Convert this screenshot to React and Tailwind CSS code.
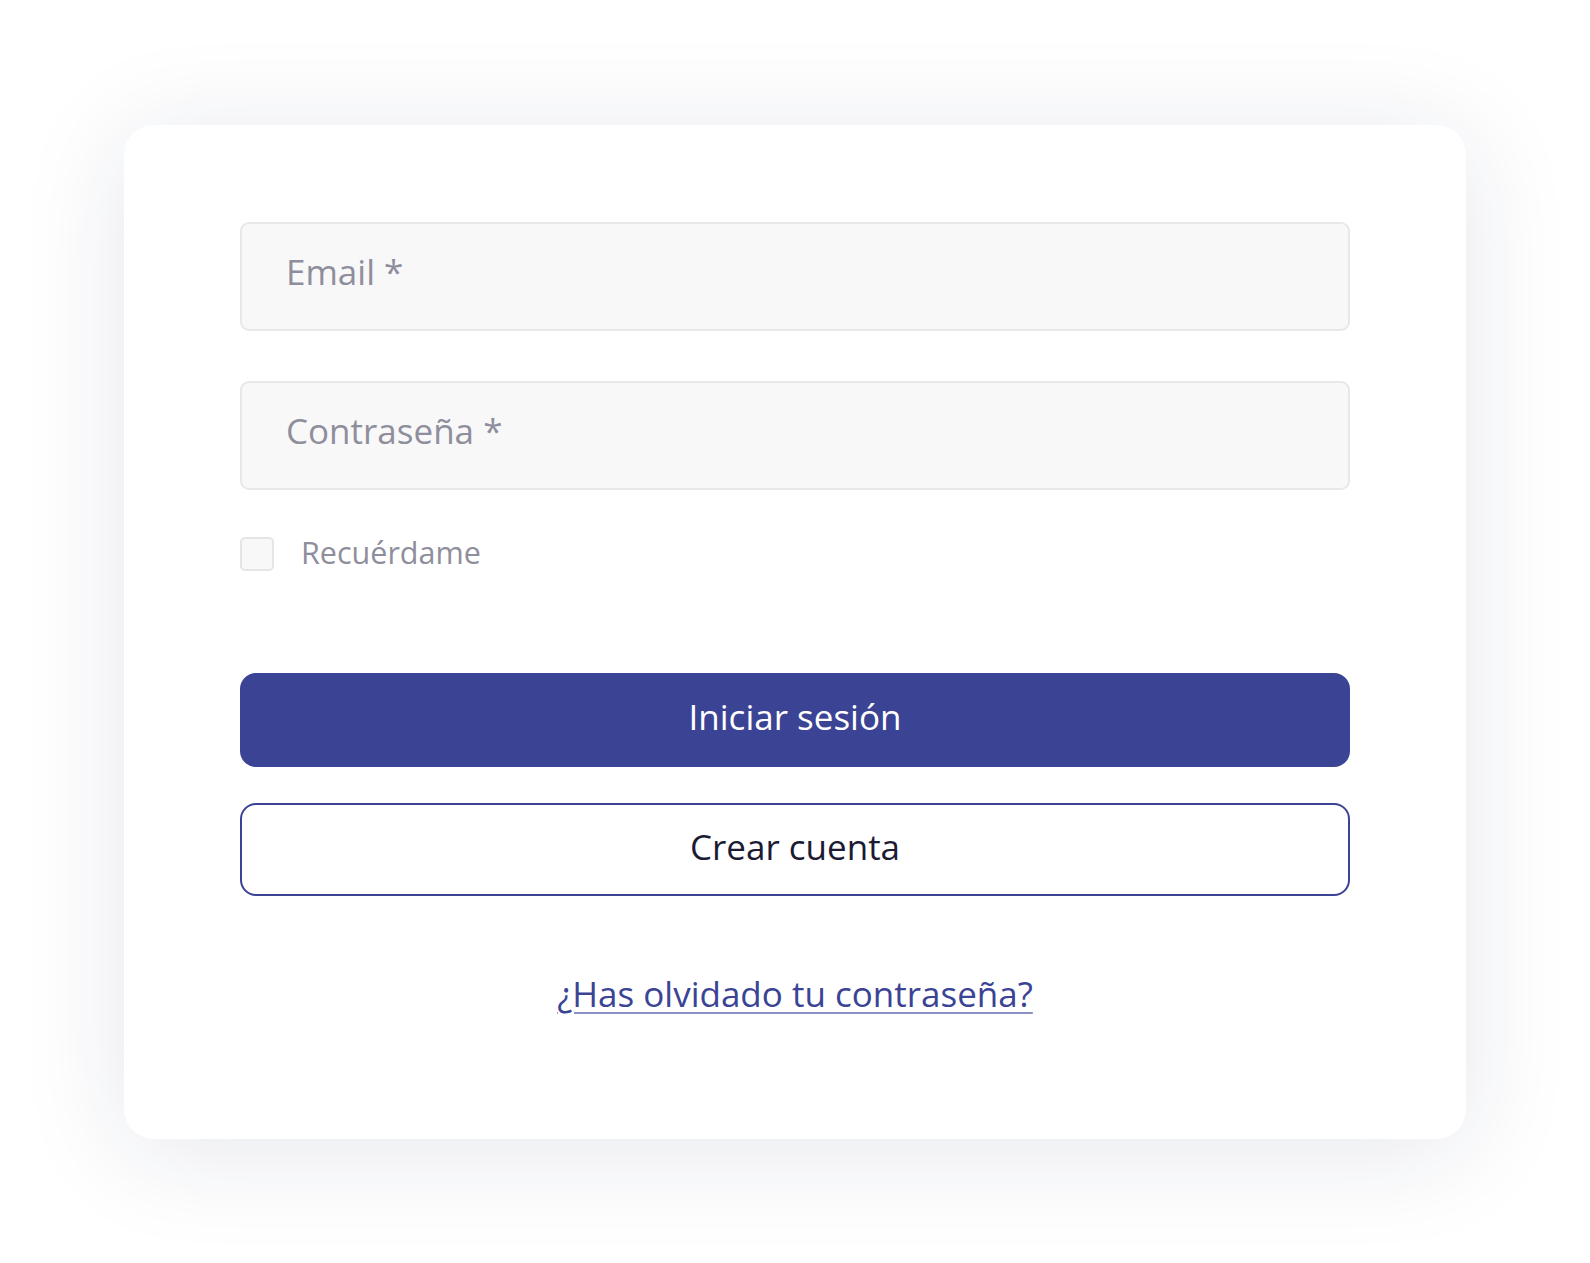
import React from "react";

export default function App() {
  return (
    <div className="w-[1590px] h-[1263px] bg-white flex items-center justify-center" style={{ fontFamily: '"Open Sans", "Noto Sans", sans-serif' }}>
      <div className="w-[1342px] h-[1014px] bg-white rounded-[30px] shadow-[0_12px_110px_rgba(30,40,80,0.11)] px-[116px] pt-[97px] flex flex-col">
        <input
          type="email"
          placeholder="Email *"
          className="h-[109px] w-full rounded-[9px] border-2 border-[#e8e8ea] bg-[#f8f8f9] px-[44px] pb-[10px] text-[35px] text-[#33334a] placeholder:text-[#8e8e9c] outline-none"
        />
        <input
          type="password"
          placeholder="Contraseña *"
          className="mt-[50px] h-[109px] w-full rounded-[9px] border-2 border-[#e8e8ea] bg-[#f8f8f9] px-[44px] pb-[10px] text-[35px] text-[#33334a] placeholder:text-[#8e8e9c] outline-none"
        />
        <label className="mt-[47px] flex items-center gap-[27px] h-[34px]">
          <span className="w-[34px] h-[34px] rounded-[5px] border-2 border-[#e5e5e7] bg-[#f8f8f9]" />
          <span className="text-[30.5px] text-[#8e8e9c] leading-none pb-[2px]">Recuérdame</span>
        </label>
        <button className="mt-[102px] h-[94px] w-full rounded-[16px] bg-[#3b4395] text-white text-[35px] pb-[4px]">
          Iniciar sesión
        </button>
        <button className="mt-[36px] h-[93px] w-full rounded-[16px] border-2 border-[#3b4395] bg-white text-[#1b1b33] text-[35px] pb-[4px]">
          Crear cuenta
        </button>
        <div className="mt-[74px] flex justify-center">
          <a href="#" className="text-[35px] leading-[48px] text-[#3b4395] underline decoration-[#8c90c6] decoration-2 underline-offset-[5px]">
            ¿Has olvidado tu contraseña?
          </a>
        </div>
      </div>
    </div>
  );
}
